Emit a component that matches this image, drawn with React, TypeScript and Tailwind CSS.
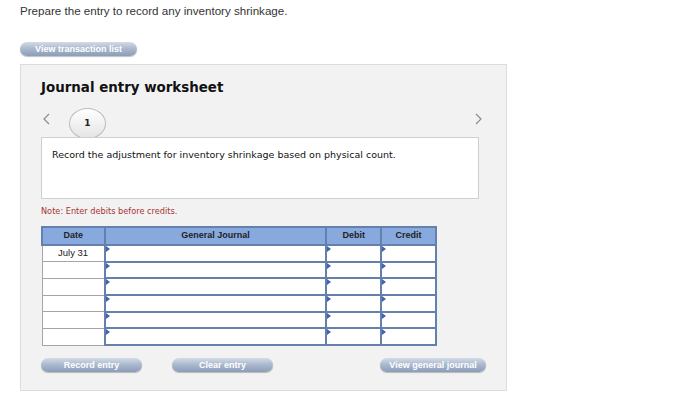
const rows = ["July 31", "", "", "", "", ""];

function PillButton({ label, width }: { label: string; width: string }) {
    return (
        <button
            className={`block ${width} h-[14px] rounded-full bg-gradient-to-b from-[#d3dbe7] via-[#a9b7cc] to-[#8c9db8] text-[9px] font-bold leading-[14px] text-white shadow-[0_1px_1px_rgba(0,0,0,0.25)] [font-family:'Liberation_Sans',Arial,sans-serif]`}
        >
            {label}
        </button>
    );
}

function InputCell() {
    return (
        <td className="relative border-2 border-[#6680ad] bg-white p-0">
            <span className="absolute left-0 top-0 h-0 w-0 border-y-[3px] border-l-[4px] border-y-transparent border-l-[#3d64b0]" />
        </td>
    );
}

function Chevron({ dir }: { dir: "left" | "right" }) {
    return (
        <svg width="7" height="12" viewBox="0 0 7 12" className="block">
            <path
                d={dir === "left" ? "M6 1 L1 6 L6 11" : "M1 1 L6 6 L1 11"}
                fill="none"
                stroke="#8c8c8c"
                strokeWidth="1.2"
            />
        </svg>
    );
}

export default function App() {
    return (
        <div className="h-[413px] w-[700px] bg-white pl-[20px] pt-[4px] [font-family:'Liberation_Sans',Arial,sans-serif]">
            <p className="text-[11.6px] leading-[14px] text-[#333]">
                Prepare the entry to record any inventory shrinkage.
            </p>

            <div className="mt-[24px]">
                <PillButton label="View transaction list" width="w-[117px]" />
            </div>

            <div className="mt-[8px] h-[327px] w-[487px] border border-[#dcdcdc] bg-[#f2f2f2] px-[20px] pt-[14px] [font-family:'DejaVu_Sans',Verdana,sans-serif]">
                <h2 className="text-[13.4px] font-bold leading-[18px] text-[#111]">
                    Journal entry worksheet
                </h2>

                {/* pager */}
                <div className="mt-[11px] flex h-[30px] items-start">
                    <span className="ml-[2px] mt-[5px]">
                        <Chevron dir="left" />
                    </span>
                    <div className="ml-[19px] flex h-[31px] w-[37px] items-center justify-center rounded-[50%] border border-[#bbb] bg-gradient-to-b from-white to-[#e4e4e4] text-[9px] font-bold text-[#222]">
                        1
                    </div>
                    <span className="ml-auto mr-[4px] mt-[5px]">
                        <Chevron dir="right" />
                    </span>
                </div>

                <div className="relative -mt-[1px] h-[62px] w-[438px] border border-[#cfcfcf] bg-white px-[10px] pt-[11px] text-[9.5px] leading-[12px] text-[#111]">
                    Record the adjustment for inventory shrinkage based on physical count.
                </div>

                <p className="mt-[7px] text-[8.2px] leading-[10px] text-[#a83232]">
                    Note: Enter debits before credits.
                </p>

                <table className="mt-[10px] w-[396px] border-collapse text-[9px] [font-family:'Liberation_Sans',Arial,sans-serif]">
                    <thead>
                        <tr className="h-[18px] bg-[#88a9de] font-bold text-[#222]">
                            <th className="w-[63px] border-2 border-[#6680ad] font-bold">Date</th>
                            <th className="w-[223px] border-2 border-[#6680ad] font-bold">General Journal</th>
                            <th className="w-[55px] border-2 border-[#6680ad] font-bold">Debit</th>
                            <th className="w-[55px] border-2 border-[#6680ad] font-bold">Credit</th>
                        </tr>
                    </thead>
                    <tbody>
                        {rows.map((date, i) => (
                            <tr key={i} className="h-[16.7px]">
                                <td className="border border-[#a5a5a5] bg-white text-center text-[9.5px] text-[#222]">{date}</td>
                                <InputCell />
                                <InputCell />
                                <InputCell />
                            </tr>
                        ))}
                    </tbody>
                </table>

                <div className="mt-[12px] flex items-center">
                    <PillButton label="Record entry" width="w-[101px]" />
                    <div className="ml-[30px]">
                        <PillButton label="Clear entry" width="w-[101px]" />
                    </div>
                    <div className="ml-[107px]">
                        <PillButton label="View general journal" width="w-[106px]" />
                    </div>
                </div>
            </div>
        </div>
    );
}
